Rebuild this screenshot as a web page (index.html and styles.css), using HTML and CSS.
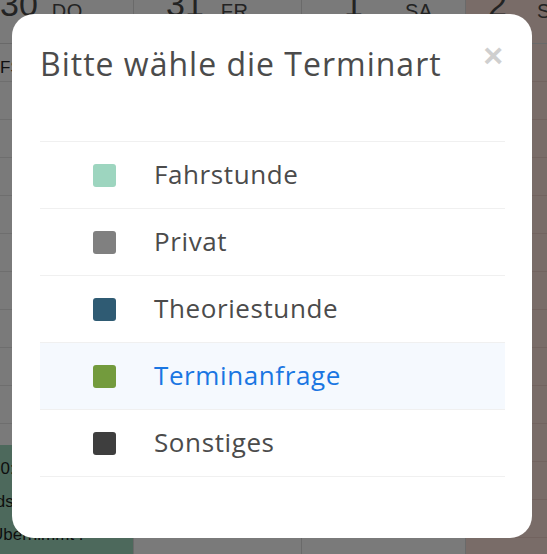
FILE: index.html
```html
<!DOCTYPE html>
<html lang="de">
<head>
<meta charset="utf-8">
<title>Terminart wählen</title>
<link rel="stylesheet" href="styles.css">
</head>
<body>
<div class="calendar">
  <div class="cal-head">
    <div class="day col-a"><span class="num">30</span><span class="wd">DO</span></div>
    <div class="day col-b"><span class="num">31</span><span class="wd">FR</span></div>
    <div class="day col-c"><span class="num">1</span><span class="wd">SA</span></div>
    <div class="day col-d weekend"><span class="num">2</span><span class="wd">SO</span></div>
  </div>
  <div class="cal-body">
    <div class="col col-a">
      <div class="allday">FS</div>
      <div class="event">
        <span>10:00 - 11:30</span>
        <span>Ids Fahrstunde</span>
        <span>Übernimmt !</span>
      </div>
    </div>
    <div class="col col-b"></div>
    <div class="col col-c"></div>
    <div class="col col-d weekend"></div>
  </div>
</div>

<div class="overlay"></div>

<div class="modal" role="dialog">
  <div class="modal-head">
    <h1 class="modal-title">Bitte wähle die Terminart</h1>
    <button class="close" aria-label="Schließen">×</button>
  </div>
  <ul class="types">
    <li class="type"><span class="swatch sw-fahr"></span><span class="label">Fahrstunde</span></li>
    <li class="type"><span class="swatch sw-privat"></span><span class="label">Privat</span></li>
    <li class="type"><span class="swatch sw-theorie"></span><span class="label">Theoriestunde</span></li>
    <li class="type active"><span class="swatch sw-anfrage"></span><span class="label">Terminanfrage</span></li>
    <li class="type"><span class="swatch sw-sonst"></span><span class="label">Sonstiges</span></li>
  </ul>
</div>
</body>
</html>
```

FILE: styles.css
```css
* { box-sizing: border-box; }

html, body {
  margin: 0;
  padding: 0;
  width: 547px;
  height: 554px;
  overflow: hidden;
  background: #ffffff;
  font-family: "Liberation Sans", Arial, sans-serif;
}

/* ---------- background calendar ---------- */
.calendar {
  margin-left: -9px;
  width: 570px;
  height: 554px;
  display: flex;
  flex-direction: column;
  color: #4a4a4a;
}

.cal-head {
  display: flex;
  height: 44px;
  border-bottom: 1px solid #dcdcdc;
  overflow: hidden;
}

.col-a { width: 143px; flex: none; }
.col-b { width: 168px; flex: none; }
.col-c { width: 164px; flex: none; }
.col-d { flex: 1; }

.day {
  display: flex;
  align-items: flex-start;
  gap: 14px;
  border-right: 1px solid #dedede;
  height: 44px;
}
.day.col-a { padding-left: 9px; }
.day.col-b { padding-left: 32px; gap: 17px; }
.day.col-c { padding-left: 42px; gap: 42px; }
.day.col-d { padding-left: 22px; gap: 30px; }

.num {
  font-size: 34px;
  line-height: 1;
  margin-top: -13px;
}
.wd {
  font-size: 20px;
  line-height: 1;
  margin-top: 1px;
  letter-spacing: 0.5px;
}

.weekend { background: #fde1d9; }

.cal-body {
  flex: 1;
  display: flex;
}

.col {
  border-right: 1px solid #dedede;
  background-image: repeating-linear-gradient(to bottom, transparent 0, transparent 37px, #e6e6e6 37px, #e6e6e6 38px);
  display: flex;
  flex-direction: column;
}
.col.weekend {
  background-color: #fde1d9;
  background-image: repeating-linear-gradient(to bottom, transparent 0, transparent 37px, #efcfc7 37px, #efcfc7 38px);
}

.allday {
  height: 44px;
  padding: 14px 0 0 9px;
  font-size: 17px;
  color: #222;
}

.event {
  margin-top: auto;
  height: 109px;
  background: #a2dcc0;
  padding: 14px 6px 0 0;
  display: flex;
  flex-direction: column;
  gap: 13px;
  font-size: 17px;
  color: #1e1e1e;
  white-space: nowrap;
  overflow: hidden;
}

/* ---------- overlay + modal ---------- */
.overlay {
  position: fixed;
  inset: 0;
  background: rgba(0, 0, 0, 0.52);
}

.modal {
  position: fixed;
  left: 12px;
  top: 14px;
  width: 520px;
  height: 524px;
  background: #ffffff;
  border-radius: 22px;
  padding: 0 27px 0 28px;
  font-family: "Open Sans", "Noto Sans", sans-serif;
}

.modal-head {
  display: flex;
  justify-content: space-between;
  align-items: flex-start;
  padding-top: 31px;
  height: 127px;
}

.modal-title {
  margin: 0;
  font-size: 32px;
  line-height: 38px;
  font-weight: 400;
  letter-spacing: 1px;
  color: #4b4b4b;
}

.close {
  border: 0;
  background: none;
  padding: 0;
  margin: -7px 2px 0 0;
  font-family: "Liberation Sans", Arial, sans-serif;
  font-size: 34px;
  line-height: 34px;
  font-weight: 700;
  color: #cfcfcf;
  cursor: pointer;
}

.types {
  list-style: none;
  margin: 0;
  padding: 0;
  border-bottom: 1px solid #f0f0f0;
}

.type {
  display: flex;
  align-items: center;
  gap: 38px;
  height: 67px;
  padding-left: 53px;
  border-top: 1px solid #f0f0f0;
  font-size: 26px;
  letter-spacing: 0.6px;
  color: #4b4b4b;
}

.type.active {
  background: #f5f9fe;
  color: #1a76e2;
}

.swatch {
  width: 23px;
  height: 23px;
  border-radius: 3px;
  flex: none;
}
.sw-fahr { background: #9dd5bf; }
.sw-privat { background: #808080; }
.sw-theorie { background: #2f5b73; }
.sw-anfrage { background: #739b3d; }
.sw-sonst { background: #3e3e3e; }

.label { line-height: 1; margin-top: -2px; }
```
